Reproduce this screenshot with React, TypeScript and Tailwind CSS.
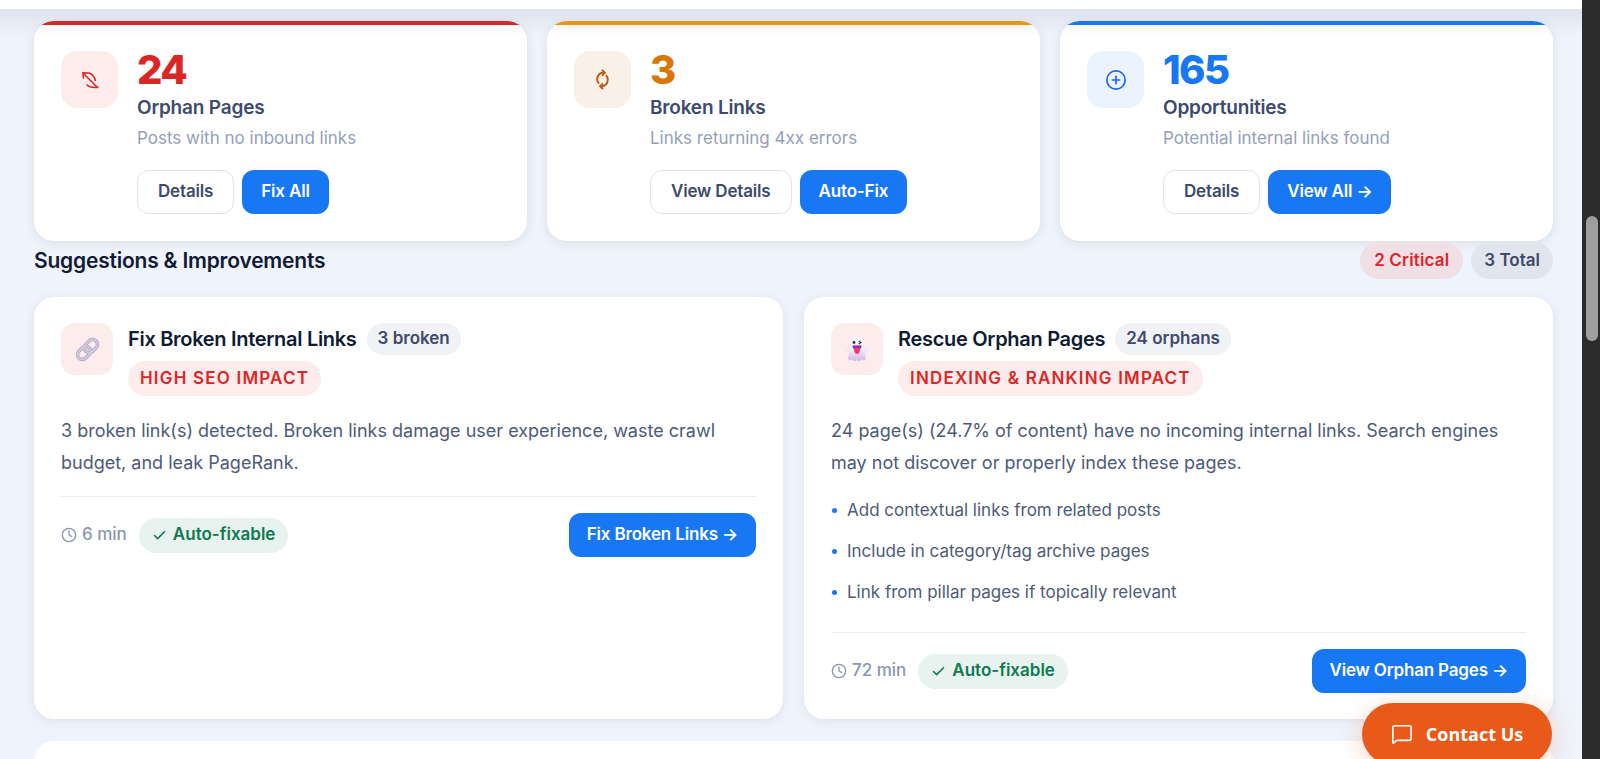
import { Check, Clock, MessageSquare, CirclePlus } from "lucide-react";

const font = "font-['Inter','Liberation_Sans',sans-serif]";

function SyncOff() {
  return (
    <svg viewBox="20 19 20 20" className="w-[20px] h-[20px]" fill="none" stroke="#dc2626" strokeWidth="1.6">
      <path d="M23.5 27.5 L23 21.8 L29 22" />
      <path d="M23 22 L37.5 36.5" />
      <path d="M29 22 C32.5 23 34.5 26 35.5 30" />
      <path d="M26.5 33.5 C29 36 33 37 38.5 36.2" />
    </svg>
  );
}

function SyncIcon() {
  return (
    <svg viewBox="0 0 24 24" className="w-[23px] h-[23px]" fill="none" stroke="#c2570c" strokeWidth="2">
      <path d="M13 5 C9 4.5 6.5 8 6.5 12 C6.5 14 7.3 15.5 8.5 16.5" />
      <path d="M11 19 C15 19.5 17.5 16 17.5 12 C17.5 10 16.7 8.5 15.5 7.5" />
      <path d="M11.5 2 L14.5 5 L11.5 8" />
      <path d="M12.5 16 L9.5 19 L12.5 22" />
    </svg>
  );
}

function ChainEmoji() {
  return (
    <svg viewBox="0 0 28 28" className="w-[27px] h-[27px]" fill="none">
      <g transform="rotate(-45 14 14)">
        <rect x="1.5" y="9" width="15" height="10" rx="5" stroke="#a89fc0" strokeWidth="3.6" />
        <rect x="11.5" y="9" width="15" height="10" rx="5" stroke="#a89fc0" strokeWidth="3.6" />
        <rect x="1.5" y="9" width="15" height="10" rx="5" stroke="#d2cbdf" strokeWidth="2.2" />
        <rect x="11.5" y="9" width="15" height="10" rx="5" stroke="#d2cbdf" strokeWidth="2.2" />
      </g>
    </svg>
  );
}

function GhostEmoji() {
  return (
    <svg viewBox="0 0 28 28" className="w-[28px] h-[28px]">
      <defs>
        <linearGradient id="ghostFill" x1="0" y1="0" x2="0" y2="1">
          <stop offset="0" stopColor="#faf8fb" />
          <stop offset="0.55" stopColor="#f1eaf6" />
          <stop offset="1" stopColor="#cfb6ea" />
        </linearGradient>
      </defs>
      <path
        d="M6.5 10 C6.5 5 9.5 2 14 2 C18.5 2 21.5 5 21.5 10 L21.5 12 L26 13.5 C26 15.5 24 17.5 21.8 17.5 L23 23.5 C22 26 19.5 25.5 18.5 24.5 C17 26.5 15 26.5 14 25 C13 26.5 11 26.5 9.5 24.5 C8.5 25.5 6 26 5 23.5 L6.2 17.5 C4 17.5 2 15.5 2 13.5 L6.5 12 Z"
        fill="url(#ghostFill)"
      />
      <circle cx="11" cy="7.5" r="1.4" fill="#35303a" />
      <path d="M15.8 6 L18 7.5 L15.8 9" stroke="#35303a" strokeWidth="1.1" fill="none" />
      <path d="M9.5 10.5 H18.5 C18.5 13 17.2 14 16.5 14.5 H11.5 C10.8 14 9.5 13 9.5 10.5 Z" fill="#7e22ce" />
      <path d="M11 12.5 H17 C17.2 15.5 16.5 19 14 19 C11.5 19 10.8 15.5 11 12.5 Z" fill="#f0386b" />
    </svg>
  );
}

type Stat = {
  value: string;
  label: string;
  desc: string;
  bar: string;
  valueClass: string;
  iconBg: string;
  icon: React.ReactNode;
  left: string;
  right: string;
};

const stats: Stat[] = [
  {
    value: "24",
    label: "Orphan Pages",
    desc: "Posts with no inbound links",
    bar: "bg-[#dc2626]",
    valueClass: "text-[#dc2626]",
    iconBg: "bg-[#fdecec]",
    icon: <SyncOff />,
    left: "Details",
    right: "Fix All",
  },
  {
    value: "3",
    label: "Broken Links",
    desc: "Links returning 4xx errors",
    bar: "bg-[#f09a0a]",
    valueClass: "text-[#d97706]",
    iconBg: "bg-[#f9f0e8]",
    icon: <SyncIcon />,
    left: "View Details",
    right: "Auto-Fix",
  },
  {
    value: "165",
    label: "Opportunities",
    desc: "Potential internal links found",
    bar: "bg-[#1877f2]",
    valueClass: "text-[#1877f2]",
    iconBg: "bg-[#eaf3fe]",
    icon: <CirclePlus className="w-[22px] h-[22px] text-[#1c64e8]" strokeWidth={1.8} />,
    left: "Details",
    right: "View All →",
  },
];

function StatCard({ s }: { s: Stat }) {
  return (
    <div className="flex-1 h-[220px] bg-white rounded-[20px] overflow-hidden shadow-[0_2px_10px_rgba(60,70,110,0.12)]">
      <div className={`h-1 ${s.bar}`} />
      <div className="flex gap-[19px] pl-[27px] pt-[26px]">
        <div className={`w-[57px] h-[57px] shrink-0 rounded-[16px] flex items-center justify-center ${s.iconBg}`}>
          {s.icon}
        </div>
        <div className="-mt-[1px]">
          <div className={`text-[40px] leading-[40px] font-extrabold tracking-[-0.04em] ${s.valueClass}`}>
            {s.value}
          </div>
          <div className="mt-[4px] text-[19px] leading-[28px] font-semibold tracking-[-0.01em] text-[#3d4a6b]">
            {s.label}
          </div>
          <div className="mt-[4px] text-[17px] leading-[24px] text-[#94a0ba]">{s.desc}</div>
          <div className="flex gap-2 mt-[20px]">
            <button className="h-[44px] px-[20px] rounded-[12px] border border-[#dfe2e8] bg-white text-[17px] font-semibold tracking-[-0.01em] text-[#3d4a6b]">
              {s.left}
            </button>
            <button className="h-[44px] px-[19px] rounded-[12px] bg-[#1877f2] text-[17px] font-semibold tracking-[-0.01em] text-white">
              {s.right}
            </button>
          </div>
        </div>
      </div>
    </div>
  );
}

function Footer({ time, action }: { time: string; action: string }) {
  return (
    <div className="flex items-center justify-between border-t border-[#e9ebef] mt-[17px] pt-[16px]">
      <div className="flex items-center gap-[12px]">
        <span className="flex items-center gap-[5px] text-[17px] font-medium text-[#8a96b0]">
          <Clock className="w-[16px] h-[16px]" strokeWidth={2} />
          {time}
        </span>
        <span className="h-[35px] px-[13px] rounded-full bg-[#e8f3ef] flex items-center gap-[6px] text-[17px] font-semibold text-[#0f7a52]">
          <Check className="w-[15px] h-[15px]" strokeWidth={2.5} />
          Auto-fixable
        </span>
      </div>
      <button className="h-[44px] px-[18px] rounded-[12px] bg-[#1877f2] text-[17px] font-semibold tracking-[-0.01em] text-white">
        {action}
      </button>
    </div>
  );
}

function SuggestionHead({ icon, title, count, impact }: { icon: React.ReactNode; title: string; count: string; impact: string }) {
  return (
    <div className="flex gap-[15px]">
      <div className="w-[52px] h-[52px] shrink-0 rounded-[14px] bg-[#fdecec] flex items-center justify-center">
        {icon}
      </div>
      <div>
        <div className="flex items-center gap-[10px]">
          <span className="text-[20px] leading-[32px] font-semibold tracking-[-0.015em] text-[#0f1a33]">{title}</span>
          <span className="h-[32px] px-[11px] rounded-full bg-[#f0f2f5] flex items-center text-[17px] font-semibold text-[#3d4a6b]">
            {count}
          </span>
        </div>
        <span className="inline-flex items-center mt-[6px] h-[35px] px-[12px] rounded-full bg-[#fdecec] text-[17px] font-semibold tracking-[0.07em] text-[#dc2626]">
          {impact}
        </span>
      </div>
    </div>
  );
}

export default function App() {
  return (
    <div className={`relative flex h-[759px] w-full overflow-hidden bg-[#eff3fb] ${font}`}>
      <div className="flex-1 min-w-0 flex flex-col">
        <div className="h-[10px] shrink-0 bg-white border-b border-[#dfe3ea]" />

        <div className="pl-[34px] pr-[29px] pt-[11px]">
          <div className="flex gap-[20px]">
            {stats.map((s) => (
              <StatCard key={s.label} s={s} />
            ))}
          </div>

          <div className="flex items-center justify-between mt-[1px] h-[37px]">
            <h2 className="text-[21px] font-semibold tracking-[-0.01em] text-[#0f1a33]">Suggestions &amp; Improvements</h2>
            <div className="flex gap-2">
              <span className="h-[37px] px-[14px] rounded-full bg-[#f1dfe6] flex items-center text-[17px] font-semibold tracking-[0.01em] text-[#dc2626]">
                2 Critical
              </span>
              <span className="h-[37px] px-[13px] rounded-full bg-[#e1e5ee] flex items-center text-[17px] font-semibold text-[#3d4a6b]">
                3 Total
              </span>
            </div>
          </div>

          <div className="flex gap-[21px] mt-[18px] h-[422px]">
            <div className="flex-1 bg-white rounded-[20px] shadow-[0_2px_10px_rgba(60,70,110,0.1)] p-[27px] pt-[26px]">
              <SuggestionHead icon={<ChainEmoji />} title="Fix Broken Internal Links" count="3 broken" impact="HIGH SEO IMPACT" />
              <p className="mt-[19px] text-[18px] leading-[32px] text-[#4d5a78]">
                3 broken link(s) detected. Broken links damage user experience, waste crawl budget, and leak PageRank.
              </p>
              <Footer time="6 min" action="Fix Broken Links →" />
            </div>

            <div className="flex-1 bg-white rounded-[20px] shadow-[0_2px_10px_rgba(60,70,110,0.1)] p-[27px] pt-[26px]">
              <SuggestionHead icon={<GhostEmoji />} title="Rescue Orphan Pages" count="24 orphans" impact="INDEXING & RANKING IMPACT" />
              <p className="mt-[19px] text-[18px] leading-[32px] text-[#4d5a78]">
                24 page(s) (24.7% of content) have no incoming internal links. Search engines may not discover or properly index these pages.
              </p>
              <ul className="mt-[19px] mb-[28px] flex flex-col gap-[17px] text-[17px] leading-[24px] text-[#4d5a78]">
                {["Add contextual links from related posts", "Include in category/tag archive pages", "Link from pillar pages if topically relevant"].map((t) => (
                  <li key={t} className="flex items-center gap-[10px] pl-[1px]">
                    <span className="w-[5px] h-[5px] rounded-full bg-[#1877f2] shrink-0" />
                    {t}
                  </li>
                ))}
              </ul>
              <Footer time="72 min" action="View Orphan Pages →" />
            </div>
          </div>

          <div className="mt-[22px] h-[60px] bg-white rounded-[20px]" />
        </div>
      </div>

      {/* browser scrollbar */}
      <div className="w-[18px] shrink-0 bg-[#2b2b2b] pl-[4px] pr-[2px]">
        <div className="mt-[216px] h-[125px] rounded-full bg-[#9e9e9e]" />
      </div>

      {/* shadow cast by the sticky header */}
      <div className="absolute top-[10px] left-0 right-[18px] h-[26px] pointer-events-none bg-gradient-to-b from-[rgba(50,65,100,0.09)] to-transparent" />

      <button className="absolute left-[1362px] top-[703px] w-[190px] h-[62px] rounded-full bg-[#e8591a] shadow-[0_4px_24px_rgba(232,89,26,0.25)] flex items-center justify-center gap-[13px] text-white text-[18px] font-bold font-['Open_Sans',sans-serif]">
        <MessageSquare className="w-[22px] h-[22px]" strokeWidth={1.8} />
        Contact Us
      </button>
    </div>
  );
}
